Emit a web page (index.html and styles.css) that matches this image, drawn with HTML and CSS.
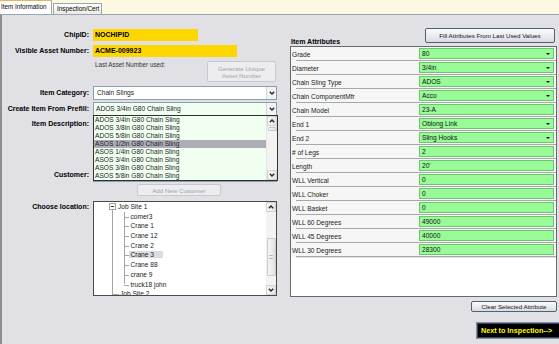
FILE: index.html
```html
<!DOCTYPE html>
<html>
<head>
<meta charset="utf-8">
<link rel="stylesheet" href="styles.css">
</head>
<body>
<div class="tabs">
  <div class="tab active">Item Information</div>
  <div class="tab">Inspection/Cert</div>
</div>
<div class="panel">
  <div class="left">
    <div class="row r-chip">
      <span class="lbl">ChipID:</span>
      <div class="yellow w-chip">NOCHIPID</div>
    </div>
    <div class="row r-asset">
      <span class="lbl">Visible Asset Number:</span>
      <div class="yellow w-asset">ACME-009923</div>
    </div>
    <div class="row r-last">
      <span class="lbl"></span>
      <div class="ctl last">
        <span class="muted">Last Asset Number used:</span>
        <div class="btn disabled gen">Generate Unique<br>Asset Number</div>
      </div>
    </div>
    <div class="row r-cat">
      <span class="lbl lh14">Item Category:</span>
      <div class="combo"><span class="ctext">Chain Slings</span><span class="cbtn"><svg width="6" height="4" viewBox="0 0 6 4"><polyline points="0.8,0.8 3,3 5.2,0.8" fill="none" stroke="#222" stroke-width="1.3"/></svg></span></div>
    </div>
    <div class="row r-prefill">
      <span class="lbl lh14">Create Item From Prefill:</span>
      <div class="combo green-bg prefill">
        <span class="ctext">ADOS 3/4in G80 Chain Sling</span><span class="cbtn"><svg width="6" height="4" viewBox="0 0 6 4"><polyline points="0.8,0.8 3,3 5.2,0.8" fill="none" stroke="#222" stroke-width="1.3"/></svg></span>
        <div class="droplist">
          <div class="items">
            <div class="item">ADOS 3/4in G80 Chain Sling</div>
            <div class="item">ADOS 3/8in G80 Chain Sling</div>
            <div class="item">ADOS 5/8in G80 Chain Sling</div>
            <div class="item sel">ASOS 1/2in G80 Chain Sling</div>
            <div class="item">ASOS 1/4in G80 Chain Sling</div>
            <div class="item">ASOS 3/4in G80 Chain Sling</div>
            <div class="item">ASOS 3/8in G80 Chain Sling</div>
            <div class="item">ASOS 5/8in G80 Chain Sling</div>
          </div>
          <div class="vscroll">
            <div class="sbtn"><svg width="6" height="4" viewBox="0 0 6 4"><polyline points="0.8,3.2 3,1 5.2,3.2" fill="none" stroke="#222" stroke-width="1.3"/></svg></div>
            <div class="track"><div class="thumb list-thumb"></div></div>
            <div class="sbtn"><svg width="6" height="4" viewBox="0 0 6 4"><polyline points="0.8,0.8 3,3 5.2,0.8" fill="none" stroke="#222" stroke-width="1.3"/></svg></div>
          </div>
        </div>
      </div>
    </div>
    <div class="row r-desc">
      <span class="lbl">Item Description:</span>
      <div class="textarea"></div>
    </div>
    <div class="row r-cust">
      <span class="lbl lh14">Customer:</span>
      <div class="combo"><span class="ctext"></span><span class="cbtn"><svg width="6" height="4" viewBox="0 0 6 4"><polyline points="0.8,0.8 3,3 5.2,0.8" fill="none" stroke="#222" stroke-width="1.3"/></svg></span></div>
    </div>
    <div class="row r-add">
      <span class="lbl"></span>
      <div class="btn disabled addcust">Add New Customer</div>
    </div>
    <div class="row r-loc">
      <span class="lbl">Choose location:</span>
      <div class="tree">
        <div class="tree-body">
          <div class="node root"><span class="exp"><span class="minus"></span></span><span class="nlabel">Job Site 1</span></div>
          <div class="kids">
            <div class="node child"><span class="nlabel">comer3</span></div>
            <div class="node child"><span class="nlabel">Crane 1</span></div>
            <div class="node child"><span class="nlabel">Crane 12</span></div>
            <div class="node child"><span class="nlabel">Crane 2</span></div>
            <div class="node child"><span class="nlabel selnode">Crane 3</span></div>
            <div class="node child"><span class="nlabel">Crane 88</span></div>
            <div class="node child"><span class="nlabel">crane 9</span></div>
            <div class="node child last-kid"><span class="nlabel">truck18 john</span></div>
          </div>
          <div class="node root2"><span class="nlabel">Job Site 2</span></div>
        </div>
        <div class="vscroll">
          <div class="sbtn"><svg width="6" height="4" viewBox="0 0 6 4"><polyline points="0.8,3.2 3,1 5.2,3.2" fill="none" stroke="#222" stroke-width="1.3"/></svg></div>
          <div class="track"><div class="thumb tree-thumb"><span class="grip"></span></div></div>
          <div class="sbtn"><svg width="6" height="4" viewBox="0 0 6 4"><polyline points="0.8,0.8 3,3 5.2,0.8" fill="none" stroke="#222" stroke-width="1.3"/></svg></div>
        </div>
      </div>
    </div>
  </div>

  <div class="right">
    <div class="attr-head">
      <span class="attr-title">Item Attributes</span>
      <div class="btn fill">Fill Attributes From Last Used Values</div>
    </div>
    <div class="pgrid">
      <div class="prow"><span class="pname">Grade</span><span class="pval dd">80</span></div>
      <div class="prow"><span class="pname">Diameter</span><span class="pval dd">3/4in</span></div>
      <div class="prow"><span class="pname">Chain Sling Type</span><span class="pval dd">ADOS</span></div>
      <div class="prow"><span class="pname">Chain ComponentMfr</span><span class="pval dd">Acco</span></div>
      <div class="prow"><span class="pname">Chain Model</span><span class="pval">23-A</span></div>
      <div class="prow"><span class="pname">End 1</span><span class="pval dd">Oblong Link</span></div>
      <div class="prow"><span class="pname">End 2</span><span class="pval dd">Sling Hooks</span></div>
      <div class="prow"><span class="pname"># of Legs</span><span class="pval">2</span></div>
      <div class="prow"><span class="pname">Length</span><span class="pval">20'</span></div>
      <div class="prow"><span class="pname">WLL Vertical</span><span class="pval">0</span></div>
      <div class="prow"><span class="pname">WLL Choker</span><span class="pval">0</span></div>
      <div class="prow"><span class="pname">WLL Basket</span><span class="pval">0</span></div>
      <div class="prow"><span class="pname">WLL 60 Degrees</span><span class="pval">49000</span></div>
      <div class="prow"><span class="pname">WLL 45 Degrees</span><span class="pval">40000</span></div>
      <div class="prow"><span class="pname">WLL 30 Degrees</span><span class="pval">28300</span></div>
    </div>
    <div class="btn clear">Clear Selected Attribute</div>
    <div class="next">Next to Inspection--&gt;</div>
  </div>
</div>
</body>
</html>
```
FILE: styles.css
```css
html, body {
  margin: 0;
  padding: 0;
  overflow: hidden;
}
body {
  width: 559px;
  height: 344px;
  background: #fbf9e1;
  font-family: "Liberation Sans", Arial, sans-serif;
  font-size: 6.6px;
  color: #000;
}

/* tabs */
.tabs {
  display: flex;
  align-items: flex-end;
  height: 14px;
}
.tab {
  box-sizing: border-box;
  height: 11px;
  width: 49px;
  margin-left: 1px;
  padding-left: 3px;
  border: 1px solid #9aa6b0;
  border-bottom: none;
  background: linear-gradient(#ffffff, #ebeae4);
  font-size: 6.3px;
  line-height: 10px;
  white-space: nowrap;
}
.tab.active {
  height: 14px;
  width: 52px;
  margin-left: 0;
  padding-left: 1px;
  background: #ffffff;
  border-top: 1px solid #eab25a;
  border-left: none;
  line-height: 12px;
}

/* panel */
.panel {
  display: flex;
  box-sizing: border-box;
  height: 330px;
  background: #e1e0e5;
  border-top: 1px solid #9aa6b0;
  border-left: 2px solid #8e8e8e;
}

/* left column */
.left {
  width: 288px;
  flex: none;
  padding-top: 14px;
}
.row {
  display: flex;
  column-gap: 4px;
}
.lbl {
  width: 87px;
  flex: none;
  text-align: right;
  font-weight: bold;
  font-size: 7px;
  line-height: 12px;
  white-space: nowrap;
}
.lbl.lh14 { line-height: 14px; }

.r-asset { margin-top: 4px; }
.r-last { margin-top: 4px; }
.r-cat { margin-top: 4px; }
.r-prefill { margin-top: 2px; }
.r-desc { margin-top: 2px; }
.r-cust { margin-top: 3px; }
.r-add { margin-top: 2px; }
.r-loc { margin-top: 5px; }

.yellow {
  box-sizing: border-box;
  height: 12px;
  background: #ffd700;
  font-weight: bold;
  font-size: 7px;
  line-height: 12px;
  padding-left: 2px;
}
.w-chip { width: 105px; }
.w-asset { width: 144px; }

.ctl.last {
  display: flex;
  width: 183px;
}
.muted {
  color: #333;
  line-height: 8px;
  padding-left: 2px;
  font-size: 6.3px;
}
.btn {
  box-sizing: border-box;
  display: flex;
  align-items: center;
  justify-content: center;
  text-align: center;
  border: 1px solid #4f6274;
  border-radius: 2px;
  background: linear-gradient(#fbfbfc, #e9e9ee 60%, #d9d9e1);
  font-size: 6.2px;
  line-height: 7px;
  color: #111;
  white-space: nowrap;
}
.btn.disabled {
  border-color: #c9c8ce;
  background: #ededef;
  color: #a3a3a8;
}
.btn.gen {
  margin-left: auto;
  width: 69px;
  height: 21px;
}
.btn.addcust {
  margin-left: 44px;
  width: 84px;
  height: 12px;
}

.combo {
  position: relative;
  box-sizing: border-box;
  display: flex;
  width: 184px;
  height: 14px;
  background: #ffffff;
  border: 1px solid #8a9db2;
}
.combo.green-bg { background: #f0fff0; }
.ctext {
  flex: 1;
  line-height: 12px;
  padding-left: 3px;
  color: #222;
}
.prefill .ctext { padding-left: 2px; }
.cbtn {
  box-sizing: border-box;
  width: 10px;
  display: flex;
  align-items: center;
  justify-content: center;
  background: #f2f2f2;
  border-left: 1px solid #d4d4d8;
}

.droplist {
  position: absolute;
  left: -1px;
  top: 12px;
  box-sizing: border-box;
  width: 185px;
  height: 66px;
  display: flex;
  background: #f0fff0;
  border: 1px solid #303030;
  z-index: 5;
}
.items {
  flex: 1;
}
.item {
  height: 8px;
  line-height: 8px;
  padding-left: 1px;
  color: #1e1e1e;
  white-space: nowrap;
}
.item.sel { background: #adadb7; }

.vscroll {
  width: 10px;
  flex: none;
  display: flex;
  flex-direction: column;
  background: #f3f3f1;
  border-left: 1px solid #e6e6e6;
}
.sbtn {
  height: 10px;
  flex: none;
  display: flex;
  align-items: center;
  justify-content: center;
  background: linear-gradient(90deg, #f7f7f7, #e4e4e4);
  border: 1px solid #d3d3d3;
  box-sizing: border-box;
}
.track {
  flex: 1;
}
.thumb {
  box-sizing: border-box;
  margin: 0 0.5px;
  border: 1px solid #c9c9c9;
  background: linear-gradient(90deg, #f5f5f5, #e2e2e2);
  border-radius: 1px;
}
.list-thumb {
  margin-top: 1px;
  height: 4px;
}
.tree-thumb {
  margin-top: 26px;
  height: 38px;
  display: flex;
  align-items: center;
  justify-content: center;
}
.grip {
  width: 4px;
  height: 4px;
  border-top: 1px solid #b8b8b8;
  border-bottom: 1px solid #b8b8b8;
  box-sizing: border-box;
}

.textarea {
  box-sizing: border-box;
  width: 184px;
  height: 47px;
  background: #ffffff;
  border: 1px solid #8a9db2;
}

/* tree */
.tree {
  box-sizing: border-box;
  width: 184px;
  height: 95px;
  display: flex;
  background: #ffffff;
  border: 1px solid #4a4a4a;
  overflow: hidden;
}
.tree .vscroll { border-left: none; }
.tree-body {
  flex: 1;
  position: relative;
  overflow: hidden;
}
.node {
  position: relative;
  height: 9.7px;
  line-height: 9.7px;
  white-space: nowrap;
  color: #222;
}
.root { padding-left: 15px; display: flex; align-items: center; }
.exp {
  box-sizing: border-box;
  width: 7px;
  height: 7px;
  border: 1px solid #a0a0a0;
  background: #fff;
  display: flex;
  align-items: center;
  justify-content: center;
}
.minus {
  width: 3px;
  height: 1px;
  background: #333;
}
.root .nlabel { margin-left: 2px; }
.root::after {
  content: "";
  position: absolute;
  left: 18px;
  top: 8px;
  bottom: 0;
  border-left: 1px solid #a5a5a5;
}
.kids {
  position: relative;
  margin-left: 30px;
}
.kids::before {
  content: "";
  position: absolute;
  left: -12px;
  top: 0;
  bottom: 0;
  border-left: 1px solid #a5a5a5;
}
.kids::after {
  content: "";
  position: absolute;
  left: 0;
  top: 0;
  bottom: 5px;
  border-left: 1px solid #a5a5a5;
}
.child { padding-left: 5px; }
.child::before {
  content: "";
  position: absolute;
  left: 0;
  width: 5px;
  top: 5px;
  border-top: 1px solid #a5a5a5;
}
.child .nlabel { padding: 0 1.5px; }
.nlabel.selnode { background: #dcdce2; padding-right: 9px; }
.root2 { padding-left: 26px; }
.root2::before {
  content: "";
  position: absolute;
  left: 18px;
  width: 7px;
  top: 5px;
  border-top: 1px solid #a5a5a5;
}
.root2::after {
  content: "";
  position: absolute;
  left: 18px;
  top: 0;
  height: 5px;
  border-left: 1px solid #a5a5a5;
}

/* right column */
.right {
  width: 267px;
  flex: none;
  padding-top: 13px;
  display: flex;
  flex-direction: column;
}
.attr-head {
  display: flex;
  justify-content: space-between;
  height: 18px;
}
.attr-title {
  align-self: flex-end;
  margin-left: 1px;
  font-weight: bold;
  font-size: 7px;
  line-height: 8px;
}
.btn.fill {
  width: 130px;
  height: 15px;
  margin-right: 2px;
}
.pgrid {
  box-sizing: border-box;
  height: 251px;
  background: #ffffff;
  border: 1px solid #686868;
}
.prow {
  position: relative;
  display: flex;
  align-items: center;
  height: 14px;
  background: #f6f6f6;
}
.prow::after {
  content: "";
  position: absolute;
  left: 5px;
  right: 0;
  bottom: 0;
  height: 1px;
  background: #a8a8a8;
  box-shadow: 0 1px 0 #dedede;
}
.pname {
  width: 127px;
  flex: none;
  padding-left: 1px;
  color: #1a1a1a;
  white-space: nowrap;
}
.pval {
  position: relative;
  box-sizing: border-box;
  width: 135px;
  height: 11px;
  margin-bottom: 1px;
  padding-left: 2px;
  line-height: 10px;
  background: #98fb98;
  border: 1px solid #6fc46f;
  color: #111;
}
.pval.dd::after {
  content: "";
  position: absolute;
  right: 3px;
  top: 4px;
  border-left: 2px solid transparent;
  border-right: 2px solid transparent;
  border-top: 2px solid #111;
}
.btn.clear {
  align-self: flex-end;
  margin-top: 4px;
  width: 86px;
  height: 11px;
}
.next {
  box-sizing: border-box;
  margin-top: 10px;
  margin-left: 186px;
  width: 92px;
  height: 17px;
  padding-left: 4px;
  background: #000;
  border: 1px solid #7d8fa5;
  box-shadow: inset 0 0 0 1px #3b4a5c;
  color: #ffff00;
  font-weight: bold;
  font-size: 7.2px;
  line-height: 15px;
  white-space: nowrap;
}
```
